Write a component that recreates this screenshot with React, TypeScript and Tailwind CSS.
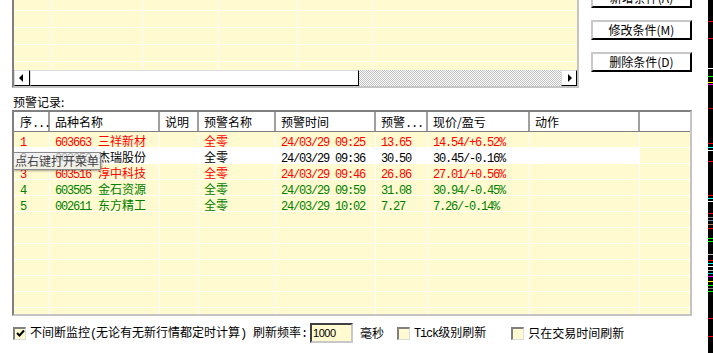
import React from "react";

const cols = ["w-[36px]", "w-[110px]", "w-[39px]", "w-[77px]", "w-[100px]", "w-[52px]", "w-[102px]", "w-[110px]", "w-[50px]"];
const topCols = ["w-[38px]", "w-[91px]", "w-[76px]", "w-[79px]", "w-[75px]", "flex-1"];

const rows = [
  { n: "1", code: "603663", name: "三祥新材", time: "24/03/29 09:25", p: "13.65", now: "14.54/+6.52%", c: "text-[#ff0000]", white: false },
  { n: "2", code: "002353", name: "杰瑞股份", time: "24/03/29 09:36", p: "30.50", now: "30.45/-0.16%", c: "text-black", white: true },
  { n: "3", code: "603516", name: "淳中科技", time: "24/03/29 09:46", p: "26.86", now: "27.01/+0.56%", c: "text-[#ff0000]", white: false },
  { n: "4", code: "603505", name: "金石资源", time: "24/03/29 09:59", p: "31.08", now: "30.94/-0.45%", c: "text-[#008000]", white: false },
  { n: "5", code: "002611", name: "东方精工", time: "24/03/29 10:02", p: "7.27", now: "7.26/-0.14%", c: "text-[#008000]", white: false },
];

const ticks = [
  { y: 21, c: "bg-[#ff0000]" }, { y: 38, c: "bg-[#ff0000]" }, { y: 68, c: "bg-white" }, { y: 76, c: "bg-[#00ff00]" },
  { y: 82, c: "bg-[#ffff00]" }, { y: 84, c: "bg-[#ff00ff]" }, { y: 108, c: "bg-[#c00000]" }, { y: 143, c: "bg-[#ff0000]" },
  { y: 147, c: "bg-[#00ffff]" }, { y: 150, c: "bg-white" }, { y: 161, c: "bg-[#ff0000]" }, { y: 195, c: "bg-[#ff0000]" },
  { y: 198, c: "bg-[#00ffff]" }, { y: 201, c: "bg-white" }, { y: 213, c: "bg-[#ff0000]" }, { y: 217, c: "bg-[#808080]" },
  { y: 220, c: "bg-[#6080a0]" }, { y: 224, c: "bg-[#a08060]" }, { y: 228, c: "bg-[#ff0000]" }, { y: 238, c: "bg-[#00ff00]" },
  { y: 241, c: "bg-[#00ff00]" }, { y: 254, c: "bg-[#c0c0c0]" }, { y: 260, c: "bg-[#ff0000]" }, { y: 263, c: "bg-[#00ffff]" },
  { y: 266, c: "bg-white" }, { y: 270, c: "bg-[#c0c0c0]" }, { y: 273, c: "bg-[#00c0c0]" }, { y: 276, c: "bg-[#ff00ff]" },
  { y: 281, c: "bg-[#ffff00]" }, { y: 285, c: "bg-[#00ff00]" }, { y: 288, c: "bg-[#808080]" }, { y: 291, c: "bg-[#00ff00]" },
  { y: 318, c: "bg-[#ff0000]" }, { y: 336, c: "bg-[#ff0000]" },
];

function Mono({ children, className = "" }: { children: React.ReactNode; className?: string }) {
  return <span className={"font-['Liberation_Mono',monospace] text-[12px] tracking-[-1.2px] " + className}>{children}</span>;
}

function Check({ checked }: { checked?: boolean }) {
  return (
    <div className="w-[13px] h-[13px] border-t-2 border-l-2 border-b border-r border-t-[#808080] border-l-[#808080] border-b-[#dcdcdc] border-r-[#dcdcdc] bg-[#fffad0] flex items-center justify-center">
      {checked && (
        <svg width="9" height="9" viewBox="0 0 9 9">
          <path d="M1 4 L3.5 6.5 L8 1.5" stroke="black" strokeWidth="2" fill="none" />
        </svg>
      )}
    </div>
  );
}

function Btn({ label }: { label: string }) {
  return (
    <div className="w-[101px] h-[20px] bg-white border-t-2 border-l-2 border-b-2 border-r-2 border-t-[#c8c8c8] border-l-[#c8c8c8] border-b-black border-r-black flex items-center justify-center text-[12px] text-black">
      {label}
    </div>
  );
}

export default function App() {
  return (
    <div className="w-[713px] h-[353px] bg-white flex overflow-hidden font-['Noto_Sans_CJK_SC',sans-serif] text-[12px] text-black">
      <div className="w-[708px] relative flex flex-col">
        {/* top condition list + buttons */}
        <div className="flex h-[88px] pl-[12px]">
          <div className="w-[567px] h-[88px] border-l-2 border-r-2 border-b-2 border-l-[#808080] border-r-[#c4c4c4] border-b-[#c4c4c4] flex flex-col">
            <div className="h-[70px] bg-[#fffad0] flex flex-col overflow-hidden">
              {[10, 17, 17, 17, 17].map((h, i) => (
                <div key={i} className={"flex shrink-0 " + (i > 0 ? "border-t border-white " : "") + (h === 10 ? "h-[10px]" : "h-[17px]")}>
                  {topCols.map((w, j) => (
                    <div key={j} className={w + (j < 5 ? " border-r border-white" : "")} />
                  ))}
                </div>
              ))}
            </div>
            <div className="h-[16px] flex">
              <div className="w-[16px] h-[16px] bg-white border-t border-l border-r border-b border-t-[#dcdcdc] border-l-[#dcdcdc] border-r-black border-b-black flex items-center justify-center">
                <svg width="6" height="8" viewBox="0 0 6 8"><path d="M4 0 L0 4 L4 8 Z" fill="black" /></svg>
              </div>
              <div className="w-[329px] h-[16px] bg-white border-t border-l border-r border-b border-t-[#dcdcdc] border-l-[#dcdcdc] border-r-black border-b-black" />
              <div className="flex-1 h-[16px] bg-[repeating-conic-gradient(#c0c0c0_0_25%,#ffffff_0_50%)] bg-[length:2px_2px]" />
              <div className="w-[16px] h-[16px] bg-white border-t border-l border-r border-b border-t-[#dcdcdc] border-l-[#dcdcdc] border-r-black border-b-black flex items-center justify-center">
                <svg width="6" height="8" viewBox="0 0 6 8"><path d="M2 0 L6 4 L2 8 Z" fill="black" /></svg>
              </div>
            </div>
          </div>
          <div className="ml-[12px] mt-[-12px] flex flex-col gap-[12px]">
            <Btn label="新增条件(A)" />
            <Btn label="修改条件(M)" />
            <Btn label="删除条件(D)" />
          </div>
        </div>

        {/* label */}
        <div className="pl-[13px] mt-[8px] h-[12px] leading-[12px]">预警记录:</div>

        {/* alert table */}
        <div className="ml-[12px] mt-[2px] w-[680px] h-[206px] border-t-2 border-l-2 border-r-2 border-b-2 border-t-[#808080] border-l-[#808080] border-r-[#c4c4c4] border-b-[#c4c4c4] flex flex-col overflow-hidden">
          <div className="h-[20px] shrink-0 flex bg-white border-b border-[#808080]">
            {["序", "品种名称", "说明", "预警名称", "预警时间", "预警", "现价/盈亏", "动作", ""].map((h, i) => (
              <div key={i} className={cols[i] + " h-[19px] leading-[19px] whitespace-nowrap " + (i === 0 ? "pl-[6px] " : "pl-[5px] ") + (i < 8 ? "border-r-2 border-r-[#a0a0a0]" : "")}>
                <span>{h}</span>
                {(i === 0 || i === 5) && <Mono>...</Mono>}
              </div>
            ))}
          </div>
          <div className="flex flex-col">
            {Array.from({ length: 12 }).map((_, r) => {
              const d = rows[r];
              return (
                <div key={r} className={"h-[16px] shrink-0 flex " + (d ? d.c : "")}>
                  {cols.map((w, j) => (
                    <div
                      key={j}
                      className={
                        w + " h-[16px] leading-[13px] pt-[2px] whitespace-nowrap border-b border-white " +
                        (j === 0 ? "pl-[6px] " : "pl-[5px] ") +
                        (j < 8 ? "border-r " : "") +
                        (d && d.white && j < 8 ? "bg-white" : "bg-[#fffad0]")
                      }
                    >
                      {d && j === 0 && <Mono>{d.n}</Mono>}
                      {d && j === 1 && (
                        <>
                          <Mono>{d.code}</Mono>
                          <span className="ml-[7px]">{d.name}</span>
                        </>
                      )}
                      {d && j === 3 && "全零"}
                      {d && j === 4 && <Mono>{d.time}</Mono>}
                      {d && j === 5 && <Mono>{d.p}</Mono>}
                      {d && j === 6 && <Mono>{d.now}</Mono>}
                    </div>
                  ))}
                </div>
              );
            })}
          </div>
        </div>

        {/* bottom options */}
        <div className="mt-[7px] h-[20px] flex items-center pl-[13px] whitespace-nowrap">
          <Check checked />
          <span className="ml-[4px]">
            不间断监控<Mono>(</Mono>无论有无新行情都定时计算<Mono>)</Mono>
          </span>
          <span className="ml-[7px]">
            刷新频率<Mono>:</Mono>
          </span>
          <div className="ml-[3px] w-[43px] h-[20px] border-t-2 border-l-2 border-b-2 border-r-2 border-t-[#404040] border-l-[#404040] border-b-[#c8c8c8] border-r-[#c8c8c8] bg-[#fffad0] flex items-center pl-[1px]">
            <span className="font-['Liberation_Sans',sans-serif] text-[11px] tracking-[-0.5px]">1000</span>
          </div>
          <span className="ml-[7px]">毫秒</span>
          <div className="ml-[13px]"><Check /></div>
          <span className="ml-[4px]"><Mono>Tick</Mono>级别刷新</span>
          <div className="ml-[25px]"><Check /></div>
          <span className="ml-[4px]">只在交易时间刷新</span>
        </div>

        {/* tooltip */}
        <div className="absolute left-[13px] top-[152px] w-[88px] h-[18px] bg-[rgba(236,236,236,0.72)] border border-[#8a8a8a] shadow-[1px_1px_2px_rgba(0,0,0,0.35)] flex items-center pl-[1px] text-[#444444] whitespace-nowrap">
          点右键打开菜单
        </div>
      </div>

      {/* black strip on the right edge */}
      <div className="w-[5px] h-[353px] bg-black relative">
        {ticks.map((t, i) => (
          <div key={i} className={"absolute left-0 w-[5px] h-[1px] " + t.c} style={{ top: t.y }} />
        ))}
      </div>
    </div>
  );
}
